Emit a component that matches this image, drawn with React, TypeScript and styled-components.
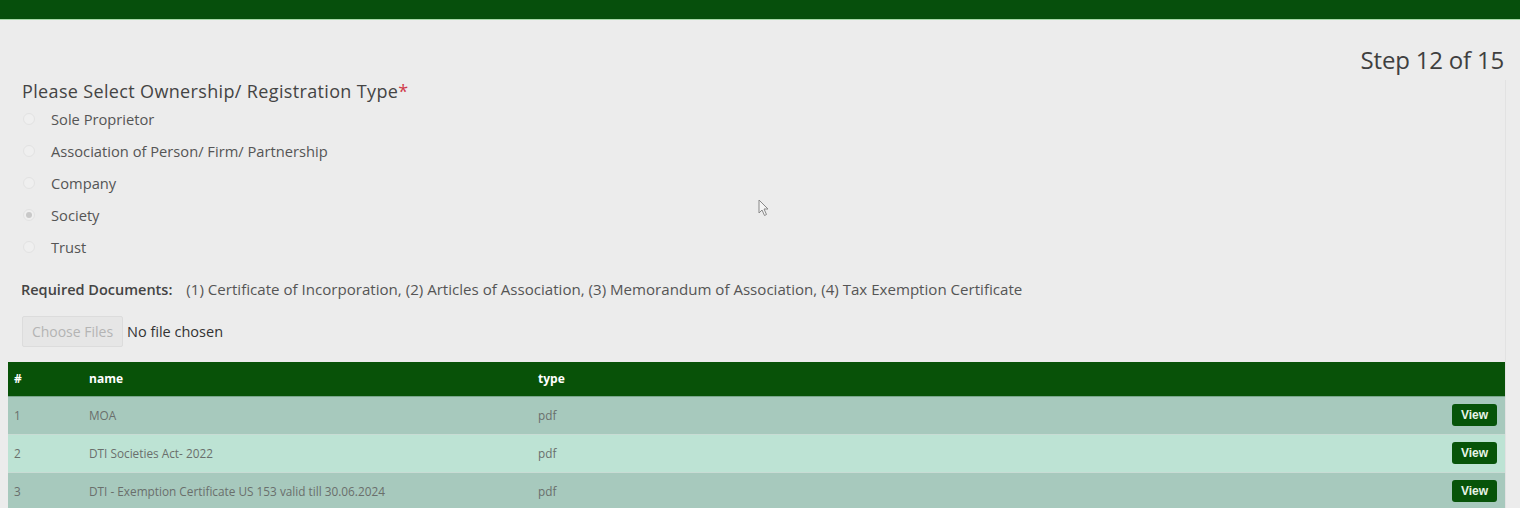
import React from "react";
import styled, { createGlobalStyle } from "styled-components";

const Global = createGlobalStyle`
  html, body { margin: 0; padding: 0; background: #ececec; }
  body { font-family: "Open Sans", "Noto Sans", sans-serif; overflow: hidden; }
  * { box-sizing: border-box; }
`;

const TopBar = styled.div`
  height: 20px;
  background: #064f0c;
  border-bottom: 1px solid #a6d9a8;
`;

const Page = styled.div`
  position: relative;
  padding: 0 14px 0 8px;
`;

const StepRow = styled.div`
  display: flex;
  justify-content: flex-end;
  padding-top: 25px;
  padding-right: 2px;
  height: 66px;
`;

const StepText = styled.div`
  font-size: 24px;
  line-height: 30px;
  color: #3f3f3f;
  letter-spacing: -0.2px;
`;

const Panel = styled.div`
  border-right: 1px solid #e2e2e2;
`;

const Section = styled.div`
  padding-left: 14px;
`;

const Heading = styled.div`
  font-size: 18px;
  line-height: 22px;
  letter-spacing: 0.35px;
  color: #444;
  margin-top: -6px;
  margin-bottom: 1px;
`;

const Req = styled.span`
  color: #d03a4a;
`;

const RadioList = styled.div`
  display: flex;
  flex-direction: column;
`;

const RadioRow = styled.label`
  display: flex;
  align-items: center;
  height: 32px;
  gap: 16px;
  padding-left: 1px;
`;

const Radio = styled.input`
  appearance: none;
  margin: 0;
  width: 12px;
  height: 12px;
  border-radius: 50%;
  border: 1px solid #e2e2e2;
  background: #efefef;
  display: grid;
  place-content: center;
  &:checked::before {
    content: "";
    width: 6px;
    height: 6px;
    border-radius: 50%;
    background: #c8c8c8;
  }
`;

const RadioLabel = styled.span`
  font-size: 14.7px;
  color: #555;
`;

const DocsRow = styled.div`
  display: flex;
  align-items: center;
  height: 28px;
  margin-top: 12px;
  font-size: 15.1px;
  color: #555;
  margin-left: -1px;
`;

const DocsLabel = styled.span`
  font-size: 14.5px;
  font-weight: 600;
  color: #444;
  margin-right: 14px;
`;

const FileRow = styled.div`
  display: flex;
  align-items: center;
  gap: 4px;
  margin-top: 13px;
  height: 31px;
`;

const FileButton = styled.button`
  height: 31px;
  width: 101px;
  padding: 0;
  border: 1px solid #dcdcdc;
  border-radius: 2px;
  background: #e6e6e6;
  color: #b4b4b4;
  font-family: inherit;
  font-size: 14px;
`;

const FileText = styled.span`
  font-size: 14.5px;
  color: #333;
`;

const Table = styled.table`
  border-collapse: collapse;
  margin-top: 15px;
  margin-left: -14px;
  width: calc(100% + 14px);
`;

const Th = styled.th<{ $w?: number }>`
  background: #085208;
  color: #fff;
  font-size: 12px;
  font-weight: 700;
  text-align: left;
  height: 34px;
  padding: 0 0 0 6px;
  border-bottom: 1px solid #7aa68c;
  width: ${(p) => (p.$w ? `${p.$w}px` : "auto")};
`;

const Tr = styled.tr<{ $alt?: boolean }>`
  background: ${(p) => (p.$alt ? "#bde3d4" : "#a7c9bd")};
  border-bottom: 1px solid #c8dcd4;
`;

const Td = styled.td<{ $right?: boolean }>`
  font-size: 11.8px;
  color: #6a6f6c;
  height: 38px;
  padding: 0 8px 0 6px;
  text-align: ${(p) => (p.$right ? "right" : "left")};
`;

const ViewButton = styled.button`
  background: #075409;
  color: #e8f5e8;
  border: none;
  border-radius: 3px;
  height: 22px;
  width: 45px;
  padding: 0;
  font-family: "Liberation Sans", Arial, sans-serif;
  font-weight: 700;
  font-size: 12px;
`;

const Cursor = styled.svg`
  position: absolute;
  left: 758px;
  top: 179px;
`;

const options = [
  { label: "Sole Proprietor", checked: false },
  { label: "Association of Person/ Firm/ Partnership", checked: false },
  { label: "Company", checked: false },
  { label: "Society", checked: true },
  { label: "Trust", checked: false },
];

const docs = [
  { n: 1, name: "MOA", type: "pdf" },
  { n: 2, name: "DTI Societies Act- 2022", type: "pdf" },
  { n: 3, name: "DTI - Exemption Certificate US 153 valid till 30.06.2024", type: "pdf" },
];

export default function App() {
  return (
    <>
      <Global />
      <TopBar />
      <Page>
        <StepRow>
          <StepText>Step 12 of 15</StepText>
        </StepRow>
        <Panel>
          <Section>
            <Heading>
              Please Select Ownership/ Registration Type<Req>*</Req>
            </Heading>
            <RadioList>
              {options.map((o) => (
                <RadioRow key={o.label}>
                  <Radio type="radio" name="own" defaultChecked={o.checked} disabled />
                  <RadioLabel>{o.label}</RadioLabel>
                </RadioRow>
              ))}
            </RadioList>
            <DocsRow>
              <DocsLabel>Required Documents:</DocsLabel>
              (1) Certificate of Incorporation, (2) Articles of Association, (3) Memorandum of Association, (4) Tax Exemption Certificate
            </DocsRow>
            <FileRow>
              <FileButton disabled>Choose Files</FileButton>
              <FileText>No file chosen</FileText>
            </FileRow>
            <Table>
              <thead>
                <tr>
                  <Th $w={75}>#</Th>
                  <Th $w={449}>name</Th>
                  <Th>type</Th>
                  <Th $w={120}></Th>
                </tr>
              </thead>
              <tbody>
                {docs.map((d, i) => (
                  <Tr key={d.n} $alt={i % 2 === 1}>
                    <Td>{d.n}</Td>
                    <Td>{d.name}</Td>
                    <Td>{d.type}</Td>
                    <Td $right>
                      <ViewButton>View</ViewButton>
                    </Td>
                  </Tr>
                ))}
              </tbody>
            </Table>
          </Section>
        </Panel>
        <Cursor width="12" height="18" viewBox="0 0 12 18">
          <path d="M1 1 L1 14 L4 11 L6.5 16.5 L8.5 15.5 L6 10 L10 10 Z" fill="#f4f4f4" stroke="#888" strokeWidth="1" />
        </Cursor>
      </Page>
    </>
  );
}
